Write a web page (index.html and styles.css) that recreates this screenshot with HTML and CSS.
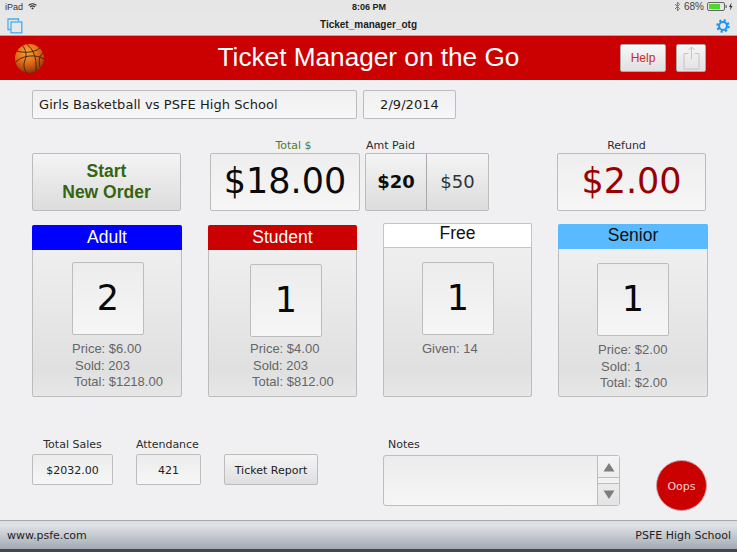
FILE: index.html
```html
<!DOCTYPE html>
<html lang="en">
<head>
<meta charset="utf-8">
<title>Ticket Manager on the Go</title>
<link rel="stylesheet" href="styles.css">
</head>
<body>
<div class="page">
  <div class="status">
    <div class="status-left">
      <span>iPad</span>
      <svg class="wifi" width="9" height="7" viewBox="0 0 12 9"><path d="M6 8.6 4.3 6.7a2.5 2.5 0 0 1 3.4 0zM3.3 5.7 2.2 4.5a5.6 5.6 0 0 1 7.6 0L8.7 5.700a4 4 0 0 0-5.400 0zM1.300 3.600 0.200 2.400a8.500 8.500 0 0 1 11.600 0L10.700 3.600a7 7 0 0 0-9.400 0z" fill="#333"/></svg>
    </div>
    <div class="status-time">8:06 PM</div>
    <div class="status-right">
      <svg width="7" height="11" viewBox="0 0 7 11"><path d="M1 3 5.500 7.500 3.400 10V1L5.500 3.500 1 8" fill="none" stroke="#777" stroke-width="1"/></svg>
      <span>68%</span>
      <svg width="26" height="9" viewBox="0 0 26 9"><rect x=".5" y=".5" width="17" height="8" rx="1.500" fill="none" stroke="#666"/><rect x="2" y="2" width="11" height="5" fill="#4cd92c"/><rect x="18.500" y="3" width="1.200" height="3" fill="#666"/><path d="M24.500 0.500 22 5h1.500L23 8.500 25.500 4H24z" fill="#333"/></svg>
    </div>
  </div>
  <div class="toolbar">
    <svg class="tabs-icon" width="16" height="16" viewBox="0 0 16 16"><path d="M3.500 11.500H1V1h10.500V3.500" fill="none" stroke="#45aef0" stroke-width="1.300"/><rect x="4" y="4" width="10.800" height="10.800" fill="none" stroke="#45aef0" stroke-width="1.300"/></svg>
    <div class="toolbar-title">Ticket_manager_otg</div>
    <svg class="gear-icon" width="14" height="14" viewBox="0 0 15 15"><circle cx="7.500" cy="7.500" r="4.200" fill="none" stroke="#1c97ea" stroke-width="2.200"/><circle cx="7.500" cy="7.500" r="6" fill="none" stroke="#1c97ea" stroke-width="2.400" stroke-dasharray="2.300 2.410"/></svg>
  </div>
  <header class="banner">
    <svg class="ball" width="31" height="31" viewBox="0 0 31 31">
      <defs><radialGradient id="ballfill" cx=".42" cy=".28" r=".8"><stop offset="0" stop-color="#f6a23a"/><stop offset=".45" stop-color="#e5701a"/><stop offset=".8" stop-color="#a8450c"/><stop offset="1" stop-color="#5e2605"/></radialGradient></defs>
      <circle cx="15.500" cy="15.500" r="14.500" fill="url(#ballfill)"/>
      <g fill="none" stroke="#3a2010" stroke-width=".9">
        <path d="M3 8C9 10 20 10 26 5"/>
        <path d="M1.500 19C9 12 22 11 30 16"/>
        <path d="M13 1.500C19 6 23 14 22 28"/>
        <path d="M9 3C12 8 13 12 11 17 9 22 10 27 13 30"/>
        <path d="M26 24C24 17 26 12 29 10"/>
      </g>
    </svg>
    <h1 class="banner-title">Ticket Manager on the Go</h1>
    <button class="btn-help">Help</button>
    <button class="btn-share">
      <svg width="17" height="24" viewBox="0 0 17 24"><path d="M1 7.500H5.500M11.500 7.500H16V23H1V7.500M8.500 13V1M5.500 4 8.500 1 11.500 4" fill="none" stroke="#c4c4c4" stroke-width="1"/></svg>
    </button>
  </header>

  <div class="row-event">
    <div class="field field-event">Girls Basketball vs PSFE High School</div>
    <div class="field field-date">2/9/2014</div>
  </div>

  <div class="row-totals">
    <button class="btn-start">Start<br>New Order</button>
    <div class="col col-total">
      <div class="cap cap-green">Total $</div>
      <div class="amount">$18.00</div>
    </div>
    <div class="col col-paid">
      <div class="cap cap-left">Amt Paid</div>
      <div class="paid">
        <div class="paid-opt paid-bold">$20</div>
        <div class="paid-opt">$50</div>
      </div>
    </div>
    <div class="col col-refund">
      <div class="cap cap-refund">Refund</div>
      <div class="amount amount-red">$2.00</div>
    </div>
  </div>

  <div class="row-cards">
    <section class="card card-adult">
      <div class="card-head head-blue">Adult</div>
      <div class="counter counter-adult">2</div>
      <div class="stats stats-adult">
        <div>Price: $6.00</div>
        <div class="ind-3">Sold: 203</div>
        <div class="ind-2">Total: $1218.00</div>
      </div>
    </section>
    <section class="card card-student">
      <div class="card-head head-red">Student</div>
      <div class="counter counter-student">1</div>
      <div class="stats stats-student">
        <div>Price: $4.00</div>
        <div class="ind-3">Sold: 203</div>
        <div class="ind-2">Total: $812.00</div>
      </div>
    </section>
    <section class="card card-free">
      <div class="card-head head-white">Free</div>
      <div class="counter counter-free">1</div>
      <div class="stats stats-free">
        <div>Given: 14</div>
      </div>
    </section>
    <section class="card card-senior">
      <div class="card-head head-sky">Senior</div>
      <div class="counter counter-senior">1</div>
      <div class="stats stats-senior">
        <div>Price: $2.00</div>
        <div class="ind-3">Sold: 1</div>
        <div class="ind-2">Total: $2.00</div>
      </div>
    </section>
  </div>

  <div class="row-bottom">
    <div class="col col-sales">
      <div class="cap-small">Total Sales</div>
      <div class="mini">$2032.00</div>
    </div>
    <div class="col col-att">
      <div class="cap-small cap-att">Attendance</div>
      <div class="mini">421</div>
    </div>
    <button class="btn-report">Ticket Report</button>
    <div class="col col-notes">
      <div class="cap-small cap-notes">Notes</div>
      <div class="notes">
        <div class="notes-text"></div>
        <div class="scroll">
          <div class="scroll-btn"><svg width="12" height="10" viewBox="0 0 12 10"><path d="M6 1 11.500 9.500H.5z" fill="#7d7d7d"/></svg></div>
          <div class="scroll-track"></div>
          <div class="scroll-btn"><svg width="12" height="10" viewBox="0 0 12 10"><path d="M6 9 .5 .5H11.500z" fill="#7d7d7d"/></svg></div>
        </div>
      </div>
    </div>
    <button class="btn-oops">Oops</button>
  </div>

  <footer class="footer">
    <span>www.psfe.com</span>
    <span>PSFE High School</span>
  </footer>
</div>
</body>
</html>
```
FILE: styles.css
```css
* { box-sizing: border-box; }
html, body { margin: 0; padding: 0; }
body { width: 737px; height: 552px; overflow: hidden; font-family: "DejaVu Sans", Verdana, sans-serif; color: #222; }
button { font: inherit; padding: 0; cursor: pointer; }

.page { width: 737px; height: 552px; display: flex; flex-direction: column; background: #f0f0f3; }

.status { height: 13px; background: #e6e6e6; display: grid; grid-template-columns: 1fr auto 1fr; align-items: center; padding: 0 4px 0 5px; font-family: "Liberation Sans", Arial, sans-serif; font-size: 9px; color: #333; }
.status-left { display: flex; align-items: center; gap: 5px; }
.status-time { font-weight: 700; color: #222; }
.status-right { display: flex; justify-content: flex-end; align-items: center; gap: 3px; color: #444; font-size: 10px; }

.toolbar { height: 23px; background: #e7e7e7; border-bottom: 1px solid #a9a9a9; display: flex; align-items: center; padding: 0 7px 0 7px; position: relative; }
.tabs-icon { margin-top: 3px; }
.gear-icon { margin-left: auto; margin-top: 3px; }
.toolbar-title { position: absolute; left: 0; right: 0; top: 6px; text-align: center; font-family: "Liberation Sans", Arial, sans-serif; font-size: 10px; font-weight: 700; color: #1e1e1e; }

.banner { height: 44px; background: #cb0000; display: flex; align-items: center; padding-left: 14px; position: relative; }
.ball { margin-top: 1px; }
.banner-title { position: absolute; left: 0; right: 0; top: 3px; margin: 0; text-align: center; font-family: "Liberation Sans", Arial, sans-serif; font-size: 26.200px; line-height: 36px; font-weight: 400; color: #fff; }
.btn-help { position: relative; margin-left: 575px; width: 46px; height: 28px; border: 1px solid #aaa; border-radius: 2px; background: linear-gradient(#f8f8f8, #e0e0e0); color: #c92a2a; font-family: "Liberation Sans", Arial, sans-serif; font-size: 12px; }
.btn-share { position: relative; margin-left: 10px; width: 30px; height: 28px; border: 1px solid #aaa; border-radius: 2px; background: linear-gradient(#f6f6f6, #e2e2e2); display: flex; align-items: center; justify-content: center; }

.row-event { display: flex; gap: 6px; margin: 10px 0 0 32px; height: 29px; }
.field { border: 1px solid #bdbdbd; border-radius: 2px; background: linear-gradient(#f0f0f0, #f7f7f7); font-size: 13px; letter-spacing: .06px; line-height: 27px; color: #1c1c1c; }
.field-event { width: 325px; padding-left: 6px; }
.field-date { width: 93px; text-align: center; }

.row-totals { display: flex; align-items: flex-end; margin: 19px 0 0 32px; height: 73px; }
.col { display: flex; flex-direction: column; }
.cap { height: 15px; font-size: 11px; line-height: 15px; text-align: center; color: #2c2c2c; }
.cap-green { color: #4f7a2e; padding-left: 17px; }
.cap-left { text-align: left; padding-left: 1px; }
.cap-refund { padding-right: 10px; }
.btn-start { width: 149px; height: 58px; border: 1px solid #bcbcbc; border-radius: 2px; background: linear-gradient(#f4f4f4, #dcdcdc); font-family: "Liberation Sans", Arial, sans-serif; font-size: 17.500px; line-height: 21px; font-weight: 700; color: #356510; }
.col-total { width: 150px; margin-left: 29px; }
.col-paid { width: 124px; margin-left: 5px; }
.col-refund { width: 149px; margin-left: 68px; }
.amount { height: 58px; border: 1px solid #bcbcbc; border-radius: 2px; background: linear-gradient(#eeeeee, #f6f6f6); text-align: center; font-size: 35px; line-height: 55px; color: #0a0a0a; }
.amount-red { color: #990000; }
.paid { display: flex; height: 58px; border: 1px solid #bcbcbc; border-radius: 2px; background: linear-gradient(#f4f4f4, #dcdcdc); }
.paid-opt { flex: 1; text-align: center; font-size: 18px; line-height: 56px; color: #333; }
.paid-opt:first-child { flex: none; width: 61px; border-right: 1px solid #a9a9a9; }
.paid-bold { font-weight: 700; color: #0d0d0d; }

.row-cards { display: flex; align-items: flex-end; margin: 0 0 0 32px; height: 186px; }
.card { width: 150px; border: 1px solid #bcbcbc; border-radius: 2px; background: linear-gradient(#f2f2f3 0%, #e0e0e1 85%, #e7e7e7 100%); }
.card-adult { height: 172px; }
.card-student { height: 172px; margin-left: 26px; width: 149px; }
.card-free { height: 174px; margin-left: 26px; width: 149px; }
.card-senior { height: 173px; margin-left: 26px; }
.card-head { margin: -1px -1px 0; height: 25px; text-align: center; font-family: "Liberation Sans", Arial, sans-serif; font-size: 17.500px; line-height: 25px; border-radius: 2px 2px 0 0; }
.head-blue { background: #0000ff; color: #fff; }
.head-red { background: #cb0000; color: #fff; }
.head-white { background: #fff; color: #111; border: 1px solid #c4c4c4; line-height: 19px; }
.head-sky { background: #5abaff; color: #111; line-height: 22px; }
.counter { width: 72px; height: 73px; border: 1px solid #bdbdbd; border-radius: 2px; background: linear-gradient(#ececec, #f6f6f6); text-align: center; font-size: 35px; line-height: 70px; color: #0a0a0a; }
.counter-adult { margin: 12px 0 0 39px; }
.counter-student { margin: 14px 0 0 41px; }
.counter-free { margin: 14px 0 0 38px; }
.counter-senior { margin: 14px 0 0 38px; }
.stats { font-family: "Liberation Sans", Arial, sans-serif; font-size: 13px; line-height: 16.500px; color: #666; }
.stats-adult { margin: 6px 0 0 39px; }
.stats-student { margin: 4px 0 0 41px; }
.stats-free { margin: 6px 0 0 38px; }
.stats-senior { margin: 6px 0 0 39px; }
.ind-3 { padding-left: 3px; }
.ind-2 { padding-left: 2px; }

.row-bottom { display: flex; align-items: flex-start; margin: 40px 0 0 32px; height: 74px; }
.cap-small { height: 17px; font-size: 11px; line-height: 15px; text-align: center; color: #2c2c2c; }
.cap-att { padding-right: 3px; letter-spacing: -.05px; }
.cap-notes { text-align: left; padding-left: 5px; height: 18px; }
.mini { height: 31px; border: 1px solid #bdbdbd; border-radius: 2px; background: linear-gradient(#ececec, #f6f6f6); font-size: 11px; line-height: 31px; text-align: center; color: #222; }
.col-sales { width: 81px; }
.col-att { width: 65px; margin-left: 23px; }
.btn-report { width: 94px; height: 31px; margin: 17px 0 0 23px; padding-top: 2px; border: 1px solid #bcbcbc; border-radius: 2px; background: linear-gradient(#f5f5f5, #dedede); font-size: 11px; color: #222; }
.col-notes { width: 237px; margin-left: 65px; }
.notes { display: flex; height: 51px; border: 1px solid #bdbdbd; border-radius: 3px; background: linear-gradient(#ececec, #f6f6f6); }
.notes-text { flex: 1; }
.scroll { width: 22px; border-left: 1px solid #bdbdbd; display: flex; flex-direction: column; background: linear-gradient(#f4f4f4, #e4e4e4); }
.scroll-btn { flex: 1; display: flex; align-items: center; justify-content: center; }
.scroll-track { height: 7px; border-top: 1px solid #bdbdbd; border-bottom: 1px solid #bdbdbd; background: #f2f2f2; }
.btn-oops { width: 51px; height: 51px; margin: 23px 0 0 36px; padding-top: 2px; border: 1px solid #c9a0a0; border-radius: 50%; background: #cb0000; color: #f4d6d6; font-size: 11px; }

.footer { margin-top: auto; height: 32px; border-top: 1px solid #a7abb0; border-bottom: 3px solid #44474c; background: linear-gradient(#d9dde2, #dfe2e6 15%, #a3aab4 100%); display: flex; justify-content: space-between; align-items: center; padding: 0 6px 0 7px; font-size: 11px; color: #1f1f1f; }
```
